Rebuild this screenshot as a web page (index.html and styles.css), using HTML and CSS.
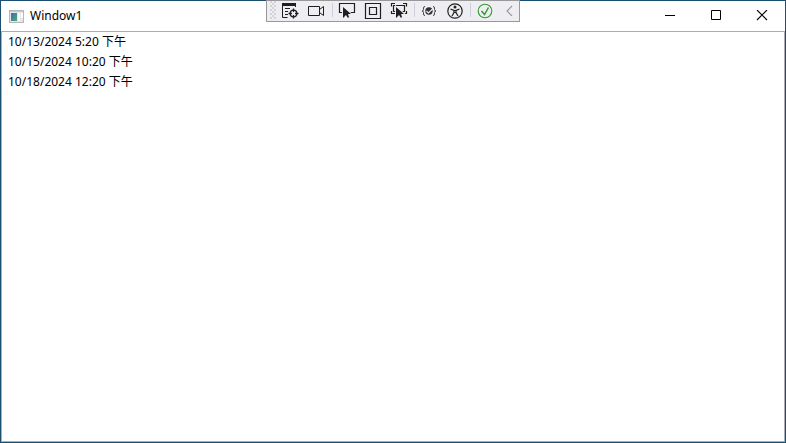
FILE: index.html
```html
<!DOCTYPE html>
<html lang="zh-CN">
<head>
<meta charset="utf-8">
<title>Window1</title>
<link rel="stylesheet" href="styles.css">
</head>
<body>
<div class="window">
  <header class="titlebar">
    <svg class="app-icon" width="15" height="13" viewBox="0 0 15 13" aria-hidden="true">
      <defs><linearGradient id="pane" x1="0" y1="0" x2="1" y2="1"><stop offset="0" stop-color="#3b6fa8"/><stop offset="1" stop-color="#4cab77"/></linearGradient></defs>
      <rect x=".5" y=".5" width="14" height="12" fill="#e4e7ea" stroke="#b4b8bc"/>
      <path d="M1 1.5h13" stroke="#c4c8cc"/>
      <rect x="2" y="3" width="6" height="8" fill="url(#pane)"/>
      <rect x="9" y="3" width="2" height="8" fill="#fff"/>
      <rect x="12" y="3" width="2" height="5" fill="#fff"/>
    </svg>
    <h1 class="title">Window1</h1>
    <div class="caption-buttons">
      <button class="caption" aria-label="Minimize"><svg width="12" height="12" viewBox="0 0 12 12"><path d="M1 5.5h10" stroke="#000"/></svg></button>
      <button class="caption" aria-label="Maximize"><svg width="12" height="12" viewBox="0 0 12 12"><path d="M1.5.5h9v9h-9z" fill="none" stroke="#000"/></svg></button>
      <button class="caption" aria-label="Close"><svg width="12" height="12" viewBox="0 0 12 12"><path d="M1 0l10 10M11 0L1 10" stroke="#000" stroke-width="1.1"/></svg></button>
    </div>
  </header>
  <ul class="list">
    <li>10/13/2024 5:20 下午</li>
    <li>10/15/2024 10:20 下午</li>
    <li>10/18/2024 12:20 下午</li>
  </ul>
</div>
<div class="toolbar" role="toolbar" aria-label="Debug tools">
  <span class="grip"></span>
  <button class="tool" aria-label="Live visual tree"><svg width="18" height="18" viewBox="1 0 18 18" fill="none" stroke="#1f1f1f"><path d="M1 3.500h14" stroke-width="3"/><path d="M1.500 3v13.500h5M4 7.500h5M4 10.500h3M4 13.500h3M14.500 3v3"/><circle cx="12.500" cy="12.500" r="3.300" stroke-width="1.300"/><path d="M12.500 7.500v3.500M12.500 14v3.500M7.500 12.500H11M14 12.500h3.500" stroke-width="1.300"/></svg></button>
  <button class="tool" aria-label="Camera"><svg width="18" height="18" viewBox="1 0 18 18" fill="none" stroke="#1f1f1f"><path d="M1.500 5.500h11v9h-11zM12.500 8.500l4-3v9l-4-3"/></svg></button>
  <span class="divider"></span>
  <button class="tool" aria-label="Select element"><svg width="18" height="18" viewBox="0 0 18 18"><path d="M1.500 11.500v-9h15v9z" fill="none" stroke="#1f1f1f" stroke-width="1.200"/><path d="M5 6v11l3-3 2 3 1-1-1-3h3z" fill="#1f1f1f" stroke="#eeeef2" stroke-width="2" paint-order="stroke"/></svg></button>
  <button class="tool" aria-label="Layout adorners"><svg width="18" height="18" viewBox="0 0 18 18" fill="none" stroke="#1f1f1f"><path d="M1.500 2.500h15v15h-15zM5.500 6.500h7v7h-7z" stroke-width="1.200"/></svg></button>
  <button class="tool" aria-label="Track focused element"><svg width="18" height="18" viewBox="0 0 18 18"><path d="M1.500 5.500v-3H5M13 2.500h3.500v3M1.500 10v2.500H5M13 12.500h3.500V10M3.500 10.500v-6h11v6z" fill="none" stroke="#1f1f1f" stroke-width="1.200"/><path d="M6 6v11l3-3 2 3 1-1-1-3h3z" fill="#1f1f1f" stroke="#eeeef2" stroke-width="2" paint-order="stroke"/></svg></button>
  <span class="divider"></span>
  <button class="tool" aria-label="Binding failures"><svg width="18" height="18" viewBox="0 0 18 18" fill="none" stroke="#444"><path d="M5 5.500q-1.500 0-1.500 1.500v1.500q0 1.500-1.500 1.500q1.500 0 1.500 1.500V13q0 1.500 1.500 1.500M13 5.500q1.500 0 1.500 1.500v1.500q0 1.500 1.500 1.500q-1.500 0-1.500 1.500V13q0 1.500-1.500 1.500"/><circle cx="9" cy="10" r="3.700" fill="#333" stroke="none"/><path d="M6.500 10l2 2 4.500-4.500" stroke="#eeeef2" stroke-width="1.200"/></svg></button>
  <button class="tool" aria-label="Accessibility"><svg width="18" height="18" viewBox="0 0 18 18" fill="none" stroke="#1f1f1f"><circle cx="9" cy="10" r="7.200" stroke-width="1.200"/><circle cx="9" cy="6" r="1.500" fill="#1f1f1f" stroke="none"/><path d="M4.500 8L8 9.500v2L6 15M13.500 8L10 9.500v2l2 3.500M8 9.500h2v2H8z" stroke-width="1.200"/></svg></button>
  <span class="divider"></span>
  <button class="tool" aria-label="Hot reload"><svg width="18" height="18" viewBox="0 0 18 18" fill="none" stroke="#329932"><circle cx="9" cy="10" r="6.800" stroke-width="1.100"/><path d="M5.500 10l3 3.500 4-7" stroke-width="1.500"/></svg></button>
  <button class="tool collapse" aria-label="Collapse"><svg width="10" height="12" viewBox="0 0 10 12" fill="none" stroke="#999"><path d="M8 2L3 7l5 5" stroke-width="1.200"/></svg></button>
</div>
</body>
</html>
```
FILE: styles.css
```css
* { box-sizing: border-box; }
body {
  margin: 0;
  font: 12px/20px "Noto Sans", "Noto Sans CJK SC", sans-serif;
  color: #000;
}
button { padding: 0; border: 0; background: none; }
svg { display: block; }
.window {
  display: flex;
  flex-direction: column;
  min-height: 100vh;
  border: 1px solid #1c4f70;
  background: #fff;
}
.titlebar {
  display: flex;
  align-items: center;
  height: 30px;
  padding-left: 8px;
}
.title { margin: 0 0 0 6px; font-size: 12px; font-weight: 400; }
.caption-buttons { display: flex; height: 100%; margin-left: auto; }
.caption { display: flex; align-items: center; justify-content: center; width: 46px; }
.list {
  flex: 1;
  margin: 0;
  padding: 0 6px;
  border: 1px solid #abadb3;
  list-style: none;
}
.toolbar {
  position: absolute;
  top: 0;
  left: 50%;
  display: flex;
  align-items: center;
  height: 22px;
  padding-bottom: 2px;
  transform: translateX(-50%);
  border: 1px solid #999;
  background: #eeeef2;
}
.grip {
  width: 6px;
  height: 18px;
  margin: 0 2px 0 3px;
  background:
    radial-gradient(circle at 1px 1px, #999 0, transparent 1px) 0 0 / 4px 4px,
    radial-gradient(circle at 1px 1px, #999 0, transparent 1px) 2px 2px / 4px 4px;
}
.tool { display: flex; align-items: center; justify-content: center; width: 26px; height: 18px; }
.divider { width: 1px; height: 14px; margin: 0 1px 0 2px; background: #cccedb; }
.collapse { width: 21px; }
```
